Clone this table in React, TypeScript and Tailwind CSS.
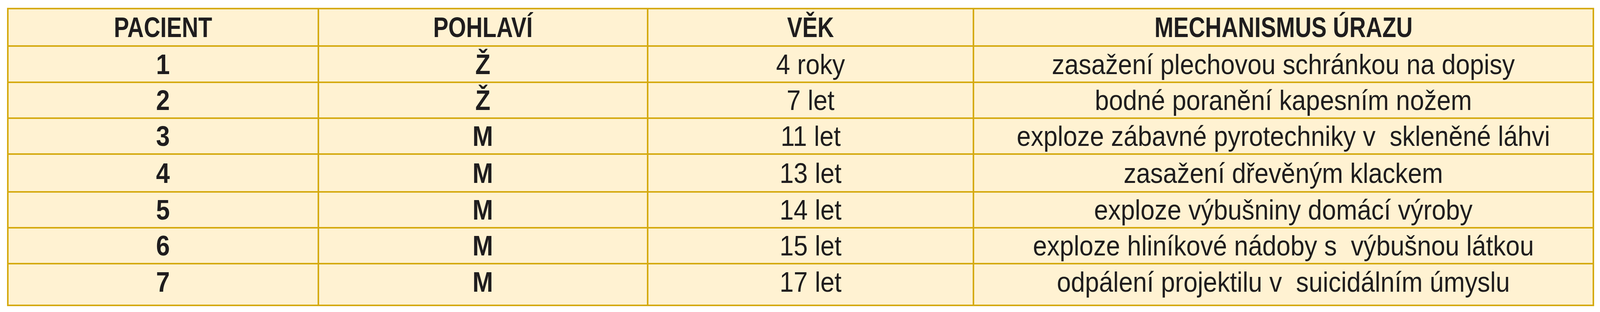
const header = ['PACIENT', 'POHLAVÍ', 'VĚK', 'MECHANISMUS ÚRAZU']

const rows = [
  ['1', 'Ž', '4 roky', 'zasažení plechovou schránkou na dopisy'],
  ['2', 'Ž', '7 let', 'bodné poranění kapesním nožem'],
  ['3', 'M', '11 let', 'exploze zábavné pyrotechniky v  skleněné láhvi'],
  ['4', 'M', '13 let', 'zasažení dřevěným klackem'],
  ['5', 'M', '14 let', 'exploze výbušniny domácí výroby'],
  ['6', 'M', '15 let', 'exploze hliníkové nádoby s  výbušnou látkou'],
  ['7', 'M', '17 let', 'odpálení projektilu v  suicidálním úmyslu'],
]

function Cell({ text, bold, head, last }: { text: string; bold?: boolean; head?: boolean; last?: boolean }) {
  return (
    <div className={`flex min-w-0 items-center justify-center bg-[#fff2d2] ${last ? 'pb-[14px]' : ''}`}>
      <span
        className={`inline-block whitespace-pre text-[72px] leading-[1.25] text-[#1f1d1e] ${
          head ? 'scale-x-[0.81] font-bold' : bold ? 'scale-x-[0.88] font-bold' : 'scale-x-[0.9]'
        }`}
      >
        {text}
      </span>
    </div>
  )
}

export default function App() {
  return (
    <div
      className="w-full h-[800px] bg-white pt-[20px] pl-[18px] pr-[15px]"
      style={{ fontFamily: '"Liberation Sans", Arial, sans-serif' }}
    >
      {/* gold gaps draw the cell borders */}
      <div className="grid w-full grid-cols-[841fr_893fr_883fr_1684fr] grid-rows-[92px_89px_88px_88px_93px_88px_88px_103px] gap-[4px] bg-[#d5aa10] p-[4px]">
        {header.map((h) => (
          <Cell key={h} text={h} head />
        ))}
        {rows.map((r, i) =>
          r.map((c, j) => (
            <Cell key={`${i}-${j}`} text={c} bold={j < 2} last={i === rows.length - 1} />
          ))
        )}
      </div>
    </div>
  )
}
